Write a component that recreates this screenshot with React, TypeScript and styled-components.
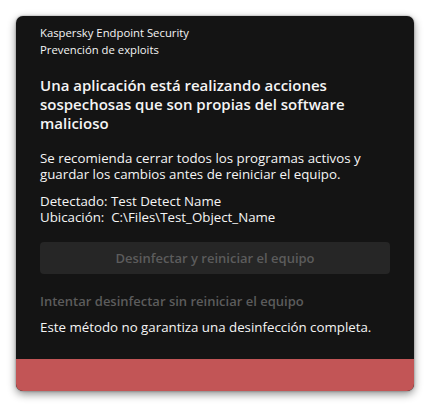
import styled, { createGlobalStyle } from 'styled-components';

const GlobalStyle = createGlobalStyle`
  html, body {
    margin: 0;
    padding: 0;
    background: #ffffff;
  }
  body {
    font-family: 'Open Sans', 'Noto Sans', sans-serif;
  }
`;

const COLORS = {
  card: '#141414',
  text: '#f5f5f5',
  muted: '#5c5c5c',
  button: '#262626',
  red: '#c25556',
};

function App() {
  return (
    <>
      <GlobalStyle />
      <Page>
        <Card>
          <Body>
            <Header>
              <HeaderLine>Kaspersky Endpoint Security</HeaderLine>
              <HeaderLine>Prevención de exploits</HeaderLine>
            </Header>
            <Title>
              Una aplicación está realizando acciones sospechosas que son
              propias del software malicioso
            </Title>
            <Text>
              Se recomienda cerrar todos los programas activos y guardar los
              cambios antes de reiniciar el equipo.
            </Text>
            <Details>
              <DetailLine>Detectado: Test Detect Name</DetailLine>
              <DetailLine>Ubicación:&nbsp; C:\Files\Test_Object_Name</DetailLine>
            </Details>
            <Button disabled>Desinfectar y reiniciar el equipo</Button>
            <LinkText>Intentar desinfectar sin reiniciar el equipo</LinkText>
            <Note>Este método no garantiza una desinfección completa.</Note>
          </Body>
          <StatusBar />
        </Card>
      </Page>
    </>
  );
}

const Page = styled.div`
  width: 430px;
  height: 407px;
  padding: 16px 16px 0 16px;
  box-sizing: border-box;
`;

const Card = styled.div`
  width: 398px;
  height: 375px;
  display: flex;
  flex-direction: column;
  background-color: ${COLORS.card};
  border-radius: 7px;
  overflow: hidden;
  box-shadow: 0 3px 8px rgba(0, 0, 0, 0.45), 0 0 2px rgba(0, 0, 0, 0.4);
`;

const Body = styled.div`
  flex: 1;
  display: flex;
  flex-direction: column;
  padding: 8px 24px 0 24px;
  color: ${COLORS.text};
`;

const Header = styled.div`
  display: flex;
  flex-direction: column;
  margin-bottom: 17.5px;
`;

const HeaderLine = styled.div`
  font-size: 11.3px;
  line-height: 17px;
`;

const Title = styled.div`
  font-size: 15px;
  line-height: 19.3px;
  font-weight: 600;
  margin-bottom: 17.75px;
`;

const Text = styled.div`
  font-size: 13.3px;
  line-height: 15.5px;
`;

const Details = styled.div`
  display: flex;
  flex-direction: column;
  margin-top: 10.5px;
  margin-bottom: 16.25px;
`;

const DetailLine = styled.div`
  font-size: 13.3px;
  line-height: 16.5px;
`;

const Button = styled.button`
  height: 32px;
  width: 100%;
  padding: 0;
  border: none;
  border-radius: 4px;
  background-color: ${COLORS.button};
  color: ${COLORS.muted};
  font-family: inherit;
  font-size: 13px;
  font-weight: 600;
  margin-bottom: 19px;
`;

const LinkText = styled.div`
  font-size: 13px;
  line-height: 16px;
  font-weight: 600;
  color: ${COLORS.muted};
  margin-bottom: 10px;
`;

const Note = styled.div`
  font-size: 13.3px;
  line-height: 16px;
`;

const StatusBar = styled.div`
  height: 32px;
  background-color: ${COLORS.red};
`;

export default App;
